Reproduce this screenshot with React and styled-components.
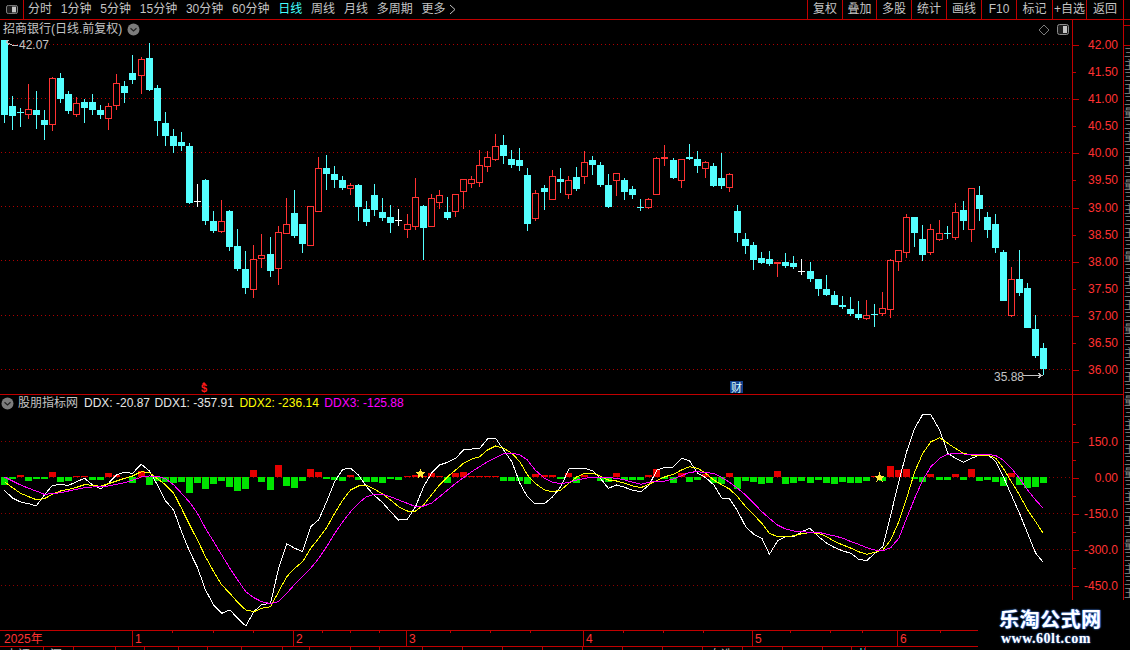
import React from "react";
import styled, { createGlobalStyle } from "styled-components";

const RED_LINE = "#c00000";
const RED_TEXT = "#ff3232";
const CYAN = "#54ffff";
const UI_FONT = '"Noto Sans CJK SC", "Liberation Sans", sans-serif';
const NUM_FONT = '"Liberation Sans", "Noto Sans CJK SC", sans-serif';

const Global = createGlobalStyle`
  html, body { margin: 0; padding: 0; background: #000; }
  #root { width: 1130px; height: 650px; }
`;

const Screen = styled.div`
  position: relative;
  width: 1130px;
  height: 650px;
  background: #000;
  overflow: hidden;
  display: flex;
  flex-direction: column;
  font-family: ${UI_FONT};
`;

const Toolbar = styled.header`
  display: flex;
  align-items: stretch;
  height: 19px;
  border-bottom: 1px solid ${RED_LINE};
  flex: none;
`;
const ToggleBox = styled.div`
  width: 23px;
  border-right: 1px solid ${RED_LINE};
  display: flex;
  align-items: center;
  justify-content: center;
  flex: none;
`;
const PeriodTabs = styled.nav`
  display: flex;
  align-items: center;
  gap: 8.8px;
  padding-left: 4px;
  flex: 1;
`;
const PeriodTab = styled.span`
  font-size: 12px;
  line-height: 19px;
  white-space: nowrap;
  color: ${(p) => (p.$active ? "#4ff" : "#c4c4c4")};
  font-family: ${NUM_FONT};
`;
const MoreArrowSlot = styled.span`
  display: flex;
  margin-left: -5px;
`;
const ActionButton = styled.div`
  width: ${(p) => p.$w}px;
  flex: none;
  box-sizing: border-box;
  border-left: 1px solid ${RED_LINE};
  font-size: 12px;
  line-height: 19px;
  color: #c4c4c4;
  text-align: center;
  white-space: nowrap;
  font-family: ${NUM_FONT};
`;
const ToolbarEnd = styled.div`
  width: 7px;
  border-left: 1px solid ${RED_LINE};
  flex: none;
  box-sizing: border-box;
`;

const Body = styled.main`
  display: grid;
  grid-template-columns: 1072px 51px 7px;
  grid-template-rows: 375px 235px;
  flex: none;
`;
const Pane = styled.section`
  position: relative;
  box-sizing: border-box;
  ${(p) => p.$divider && `border-bottom: 1px solid ${RED_LINE};`}
`;
const ChartSvg = styled.svg`
  display: block;
`;
const PaneTitle = styled.div`
  position: absolute;
  left: ${(p) => p.$left}px;
  top: ${(p) => p.$top}px;
  display: flex;
  align-items: center;
  gap: ${(p) => p.$gap || 0}px;
  white-space: nowrap;
  font-size: 12px;
  line-height: 16px;
  color: #c4c4c4;
  font-family: ${NUM_FONT};
`;
const LegendItem = styled.span`
  color: ${(p) => p.$color};
  font-family: ${NUM_FONT};
  font-size: 12px;
  margin-right: ${(p) => p.$mr ?? 1.5}px;
`;
const PriceTag = styled.span`
  position: absolute;
  left: ${(p) => p.$left}px;
  top: ${(p) => p.$top}px;
  font-family: ${NUM_FONT};
  font-size: 12px;
  line-height: 14px;
  color: #c4c4c4;
`;
const Overlay = styled.div`
  position: absolute;
  left: ${(p) => p.$left}px;
  top: ${(p) => p.$top}px;
  display: flex;
`;
const EventDollar = styled.span`
  position: absolute;
  left: 200px;
  top: 363px;
  width: 8px;
  text-align: center;
  font-family: ${NUM_FONT};
  font-weight: 700;
  font-size: 11px;
  line-height: 11px;
  color: #ff1a1a;
  &::before {
    content: "";
    position: absolute;
    left: 1.5px;
    top: -1px;
    border-left: 2.5px solid transparent;
    border-right: 2.5px solid transparent;
    border-bottom: 2px solid #ff1a1a;
  }
`;
const EventBadge = styled.span`
  position: absolute;
  left: 730px;
  top: 361px;
  width: 13px;
  height: 12px;
  background: #123f8c;
  color: #dff;
  font-size: 11px;
  line-height: 12px;
  text-align: center;
`;

const Scale = styled.div`
  box-sizing: border-box;
  border-left: 1px solid ${RED_LINE};
  padding-top: ${(p) => p.$pad}px;
  ${(p) => p.$divider && `border-bottom: 1px solid ${RED_LINE};`}
`;
const ScaleRow = styled.div`
  position: relative;
  height: ${(p) => p.$h}px;
  display: flex;
  align-items: center;
  justify-content: flex-end;
  padding-right: 5px;
  font-family: ${NUM_FONT};
  font-size: 12px;
  color: ${RED_TEXT};
  &::before {
    content: "";
    position: absolute;
    left: 0;
    top: 50%;
    width: ${(p) => (p.$major ? 6 : 3)}px;
    height: 1px;
    background: ${RED_LINE};
  }
`;

const ClippedColumn = styled.aside`
  grid-row: 1 / span 2;
  grid-column: 3;
  box-sizing: border-box;
  border-left: 1px solid ${RED_LINE};
  display: flex;
  flex-direction: column;
  overflow: hidden;
`;
const ClipHead = styled.div`
  height: 5px;
  border-bottom: 1px solid ${RED_LINE};
  flex: none;
`;
const ClipHeadTall = styled.div`
  height: 19px;
  border-bottom: 1px solid ${RED_LINE};
  flex: none;
`;
const ClipLine = styled.div`
  width: 6px;
  height: 12px;
  overflow: hidden;
  white-space: nowrap;
  font-size: 11px;
  line-height: 12px;
  color: #8a8a8a;
  flex: none;
`;

const TimeAxis = styled.div`
  width: 978px;
  height: 15px;
  position: relative;
  display: flex;
  border-top: 1px solid ${RED_LINE};
  border-bottom: 1px solid ${RED_LINE};
  flex: none;
`;
const TimeSegment = styled.div`
  width: ${(p) => p.$w}px;
  box-sizing: border-box;
  flex: none;
  padding-left: ${(p) => (p.$first ? 4 : 2)}px;
  ${(p) => !p.$first && `border-left: 1px solid ${RED_LINE};`}
  font-family: ${NUM_FONT};
  font-size: 12px;
  line-height: 16px;
  color: ${RED_TEXT};
`;
const AxisTicks = styled.svg`
  position: absolute;
  left: 0;
  top: 0;
`;

const StatusBar = styled.footer`
  display: flex;
  height: 3px;
  overflow: hidden;
  flex: none;
`;
const StatusCell = styled.div`
  width: ${(p) => p.$w}px;
  box-sizing: border-box;
  flex: none;
  padding-left: 6px;
  ${(p) => !p.$first && `border-left: 1px solid ${RED_LINE};`}
  font-size: 12px;
  line-height: 14px;
  margin-top: 0;
  color: ${(p) => (p.$hot ? CYAN : "#bdbdbd")};
  white-space: nowrap;
  overflow: hidden;
`;

const Watermark = styled.div`
  position: absolute;
  left: 978px;
  top: 600px;
  width: 152px;
  height: 50px;
  background: #000;
  display: flex;
  flex-direction: column;
  align-items: flex-start;
  padding: 7px 0 0 21px;
  box-sizing: border-box;
`;
const WatermarkTitle = styled.div`
  font-family: "Noto Sans CJK SC", sans-serif;
  font-weight: 700;
  font-size: 20px;
  line-height: 24px;
  letter-spacing: 0.5px;
  color: #fff;
  text-shadow: 0 0 2px #4a90ff, 1px 0 1px #3f7fe0;
`;
const WatermarkUrl = styled.div`
  font-family: "Liberation Serif", serif;
  font-weight: 700;
  font-size: 14px;
  line-height: 15px;
  letter-spacing: 0.5px;
  color: #fff;
  text-shadow: 0 0 2px #4a90ff;
  margin-left: 2px;
`;

/* x, kind, wickTop, bodyTop, bodyBottom, wickBottom  (c cyan, r hollow red, d cyan doji, w white doji, f red bar) */
const CANDLES = [
  [4,"c",40,40,115,123],[12,"c",96,106,116,130],[20,"d",108,112,112,127],[28,"r",84,109,114,119],[36,"c",91,110,115,129],[44,"c",110,120,125,140],
  [52,"r",77,78,124,131],[60,"c",73,78,99,103],[68,"c",91,94,111,114],[76,"r",97,103,114,117],[84,"c",99,102,108,123],[92,"c",94,102,110,115],
  [100,"c",105,110,115,119],[108,"r",103,106,118,130],[116,"r",74,83,105,110],[124,"c",81,86,93,103],[132,"c",55,73,80,84],[141,"r",57,59,75,94],
  [149,"c",43,58,90,91],[157,"c",85,88,121,136],[165,"c",112,123,136,146],[173,"c",129,136,146,153],[181,"c",132,142,146,151],[189,"c",143,146,203,204],
  [197,"w",184,201,201,207],[205,"c",179,180,221,225],[213,"c",211,221,231,233],[221,"r",200,221,231,233],[229,"c",210,211,247,251],[237,"c",229,246,269,271],
  [245,"c",251,269,288,294],[253,"r",245,259,289,298],[261,"r",234,255,258,268],[270,"c",237,254,271,277],[278,"r",226,232,268,285],[286,"r",198,224,233,233],
  [294,"c",190,213,236,238],[302,"c",224,224,244,253],[310,"r",206,206,245,246],[318,"r",157,168,211,211],[326,"c",155,168,174,190],[334,"c",166,174,180,188],
  [342,"c",176,180,188,190],[350,"r",183,185,188,195],[358,"c",184,185,207,221],[366,"c",201,209,222,226],[374,"c",184,195,210,216],[382,"c",198,212,218,221],
  [390,"c",205,217,223,233],[398,"w",209,220,220,226],[407,"r",214,224,229,238],[415,"r",178,197,226,230],[423,"c",205,206,228,260],[431,"r",194,198,226,226],
  [439,"r",190,195,202,209],[447,"c",197,212,218,220],[455,"r",194,194,211,217],[463,"r",179,179,191,209],[471,"r",176,179,183,188],[479,"r",150,165,182,187],
  [487,"r",151,157,166,172],[495,"r",134,146,159,161],[503,"c",135,145,156,164],[511,"c",150,159,165,168],[519,"c",148,160,166,171],[527,"c",168,175,224,231],
  [535,"r",190,193,218,221],[544,"c",185,188,192,210],[552,"r",170,176,199,199],[560,"c",168,179,182,193],[568,"r",176,180,194,199],[576,"c",167,177,189,191],
  [584,"r",151,162,176,184],[592,"c",156,160,165,175],[600,"c",162,165,185,187],[608,"c",174,185,207,208],[616,"r",173,173,180,196],[624,"c",178,180,192,200],
  [632,"c",186,189,195,199],[640,"c",199,207,207,211],[648,"r",198,199,207,209],[656,"r",157,158,194,194],[664,"f",145,157,159,166],[673,"c",158,160,178,179],
  [681,"r",159,159,180,188],[689,"c",144,157,159,160],[697,"c",151,159,166,173],[705,"r",161,162,168,178],[713,"c",163,166,186,187],[721,"c",153,178,186,189],
  [729,"r",173,174,187,192],[737,"c",205,211,233,242],[745,"c",233,239,246,254],[753,"c",242,245,260,270],[761,"c",252,258,263,264],[769,"c",251,259,264,266],
  [777,"f",262,262,264,277],[785,"c",253,262,266,268],[793,"c",256,263,267,269],[801,"w",259,271,271,275],[810,"c",262,271,279,282],[818,"c",279,279,289,296],
  [826,"c",275,289,295,296],[834,"c",291,295,305,305],[842,"c",296,305,307,309],[850,"c",297,309,314,316],[858,"c",301,314,318,320],[866,"r",300,315,318,320],
  [874,"d",304,314,314,327],[882,"r",292,308,313,316],[890,"r",259,260,309,318],[898,"r",250,250,261,271],[906,"r",214,217,252,258],[914,"c",217,217,233,247],
  [922,"c",225,239,255,261],[930,"r",224,229,252,255],[939,"r",220,233,239,241],[947,"d",226,233,233,239],[955,"r",203,212,237,240],[963,"c",201,210,221,230],
  [971,"r",188,188,229,242],[979,"c",186,195,209,221],[987,"c",212,217,230,238],[995,"c",214,224,248,253],[1003,"c",250,252,301,301],[1011,"r",267,279,315,317],
  [1019,"c",250,279,293,296],[1027,"c",283,288,328,328],[1035,"c",315,329,356,358],[1043,"c",343,348,369,375],
];

/* signed histogram height for each candle: positive red, negative green */
const BARS = [-8,-2,2,-4,-2,-2,5,-5,-4,1,1,-3,-3,4,2,0,-6,6,-8,-4,-5,-6,-5,-16,-6,-12,-7,-4,-10,-14,-12,7,-5,-13,12,-9,-11,-4,8,5,-2,-3,-4,2,-3,-5,-5,-6,-2,-3,1,2,1,4,1,-6,4,5,1,1,1,1,-4,-4,-4,-7,3,2,2,-2,4,-6,2,-1,-4,-5,4,-3,-3,-3,2,8,-2,-6,4,-5,-3,3,-6,-7,4,-12,-4,-5,-7,-6,6,-7,-6,-4,-6,-3,-6,-7,-5,-6,-6,-4,1,-4,11,7,8,-2,-5,3,-3,-3,3,-3,8,-4,-3,-5,-9,4,-8,-11,-10,-6];

const WHITE_L = [[13,256],[37,279],[61,291],[85,296],[107,303],[131,270],[155,241],[179,239],[203,241],[227,230],[250,220],[274,240],[298,251],[321,235],[345,209],[369,202],[392,205],[418,178],[442,198],[466,240],[490,288],[514,316],[537,380],[561,440],[584,487],[608,555],[632,600],[656,625],[680,615],[703,640],[727,663],[751,620],[774,598],[800,596],[824,490],[848,416],[872,430],[895,440],[919,365],[943,344],[966,290],[990,230],[1014,193],[1037,190],[1060,210],[1084,245],[1108,272],[1131,292],[1155,320],[1179,345],[1205,343],[1229,305],[1253,245],[1276,205],[1300,180],[1324,172],[1348,160],[1371,135],[1395,132],[1419,130],[1442,102],[1466,100],[1490,135],[1514,170],[1538,235],[1560,275]];
const WHITE_R = [[15,297],[43,296],[67,275],[91,245],[115,192],[139,190],[163,190],[187,198],[208,220],[232,250],[256,240],[280,247],[304,256],[328,260],[352,240],[376,195],[400,187],[424,186],[448,160],[472,168],[496,205],[520,218],[544,240],[568,280],[590,281],[614,318],[638,365],[662,388],[686,400],[708,448],[732,408],[756,395],[780,395],[804,380],[828,370],[854,395],[878,415],[902,428],[926,438],[950,445],[972,463],[996,467],[1020,445],[1044,425],[1067,330],[1091,230],[1114,140],[1138,70],[1162,28],[1186,30],[1212,75],[1236,145],[1258,160],[1282,172],[1306,160],[1330,150],[1354,148],[1378,170],[1400,215],[1424,270],[1448,325],[1472,385],[1496,445],[1518,472]];
const YELLOW_L = [[13,230],[37,248],[61,265],[85,275],[107,284],[131,281],[155,268],[179,258],[203,253],[227,247],[250,239],[274,241],[298,244],[321,236],[345,228],[369,220],[392,213],[418,200],[442,203],[466,221],[490,240],[514,265],[537,310],[561,360],[584,405],[608,455],[632,500],[656,540],[680,565],[703,592],[727,615],[751,620],[774,610],[800,605],[824,560],[848,515],[872,490],[895,470],[919,430],[943,400],[966,368],[990,325],[1014,285],[1037,255],[1060,243],[1084,241],[1108,253],[1131,267],[1155,285],[1179,305],[1205,318],[1229,318],[1253,300],[1276,270],[1300,240],[1324,215],[1348,195],[1371,175],[1395,162],[1419,155],[1442,135],[1466,123],[1490,130],[1514,145],[1538,170],[1560,210]];
const YELLOW_R = [[15,235],[43,255],[67,260],[91,255],[115,235],[139,215],[163,205],[187,205],[208,213],[232,225],[256,228],[280,235],[304,243],[328,248],[352,238],[376,226],[400,215],[424,208],[448,195],[472,185],[496,190],[520,205],[544,225],[568,240],[590,252],[614,275],[638,305],[662,330],[686,355],[708,385],[732,395],[756,396],[780,392],[804,386],[828,383],[854,385],[878,395],[902,410],[926,420],[950,430],[972,440],[996,448],[1020,442],[1044,435],[1067,405],[1091,350],[1114,280],[1138,200],[1162,145],[1186,110],[1212,98],[1236,115],[1258,130],[1282,145],[1306,150],[1330,150],[1354,150],[1378,160],[1400,190],[1424,230],[1448,270],[1472,315],[1496,350],[1518,385]];
const MAGENTA_L = [[13,216],[37,228],[61,240],[85,250],[107,258],[131,268],[155,266],[179,263],[203,258],[227,253],[250,248],[274,246],[298,245],[321,243],[345,238],[369,233],[392,226],[418,216],[442,213],[466,214],[490,222],[514,240],[537,265],[561,292],[584,325],[608,370],[632,410],[656,450],[680,490],[703,525],[727,560],[751,578],[774,590],[800,596],[824,590],[848,565],[872,538],[895,515],[919,490],[943,460],[966,425],[990,385],[1014,350],[1037,320],[1060,295],[1084,275],[1108,268],[1131,268],[1155,275],[1179,285],[1205,295],[1229,305],[1253,303],[1276,295],[1300,275],[1324,255],[1348,235],[1371,218],[1395,200],[1419,185],[1442,170],[1466,158],[1490,146],[1514,144],[1538,150],[1560,165]];
const MAGENTA_R = [[15,195],[43,220],[67,232],[91,236],[115,232],[139,225],[163,220],[187,216],[208,216],[232,218],[256,220],[280,225],[304,232],[328,238],[352,232],[376,228],[400,228],[424,222],[448,212],[472,202],[496,200],[520,203],[544,205],[568,218],[590,232],[614,250],[638,270],[662,295],[686,320],[708,340],[732,360],[756,372],[780,378],[804,380],[828,382],[854,382],[878,388],[902,393],[926,400],[950,410],[972,418],[996,428],[1020,435],[1044,437],[1067,428],[1091,400],[1114,340],[1138,280],[1162,225],[1186,185],[1212,160],[1236,148],[1258,145],[1282,147],[1306,148],[1330,148],[1354,148],[1378,152],[1400,165],[1424,190],[1448,220],[1472,255],[1496,285],[1518,310]];

const toPoints = (left, right) =>
  [...left.map(([x, y]) => [x / 2.958, 405 + y / 3]), ...right.map(([x, y]) => [530 + x / 2.958, 405 + y / 3])]
    .map(([x, y]) => `${x.toFixed(1)},${y.toFixed(1)}`)
    .join(" ");

const Candle = ({ c }) => {
  const [x, kind, wt, bt, bb, wb] = c;
  const h = Math.max(bb - bt, 1);
  if (kind === "c") {
    return (
      <g fill={CYAN}>
        <rect x={x} y={wt} width="1" height={wb - wt} />
        <rect x={x - 3} y={bt} width="7" height={h} />
      </g>
    );
  }
  if (kind === "r") {
    return (
      <g>
        <rect x={x} y={wt} width="1" height={bt - wt} fill="#ff3232" />
        <rect x={x} y={bb} width="1" height={wb - bb} fill="#ff3232" />
        <rect x={x - 2.5} y={bt + 0.5} width="6" height={h} fill="#000" stroke="#ff3232" strokeWidth="1" />
      </g>
    );
  }
  const color = kind === "w" ? "#fff" : kind === "f" ? "#ff3232" : CYAN;
  return (
    <g fill={color}>
      <rect x={x} y={wt} width="1" height={wb - wt} />
      <rect x={x - 3} y={bt} width="7" height={kind === "f" ? h : 1} />
    </g>
  );
};

const GridLine = ({ y, dim }) => (
  <line x1="1" x2="1072" y1={y + 0.5} y2={y + 0.5} stroke={dim ? "#8c0000" : "#b00000"} strokeWidth="1" strokeDasharray="1 3" />
);

const starPoints = (cx, cy, r) => {
  const pts = [];
  for (let i = 0; i < 10; i++) {
    const a = -Math.PI / 2 + (i * Math.PI) / 5;
    const d = i % 2 ? r * 0.42 : r;
    pts.push(`${(cx + d * Math.cos(a)).toFixed(1)},${(cy + d * Math.sin(a)).toFixed(1)}`);
  }
  return pts.join(" ");
};

const PanelIcon = ({ w, h }) => (
  <svg width={w} height={h} viewBox="0 0 12 11" preserveAspectRatio="none">
    <rect x="0.5" y="0.5" width="11" height="10" rx="2" fill="#1c1c1c" stroke="#8c8c8c" />
    <rect x="6" y="2" width="4" height="7" fill="#c4c4c4" />
  </svg>
);
const DiamondIcon = () => (
  <svg width="12" height="12" viewBox="0 0 12 12">
    <path d="M6 1 L11 6 L6 11 L1 6 Z" fill="none" stroke="#7c7c7c" />
  </svg>
);
const ChevronCircle = () => (
  <svg width="13" height="13" viewBox="0 0 13 13">
    <circle cx="6.5" cy="6.5" r="6" fill="#7c7c7c" />
    <path d="M3.5 5.2 L6.5 8 L9.5 5.2" fill="none" stroke="#222" strokeWidth="1.2" />
  </svg>
);
const MoreArrow = () => (
  <svg width="7" height="11" viewBox="0 0 7 11">
    <path d="M1 1 L6 5.5 L1 10" fill="none" stroke="#c4c4c4" />
  </svg>
);

const TABS = ["分时", "1分钟", "5分钟", "15分钟", "30分钟", "60分钟", "日线", "周线", "月线", "多周期", "更多"];
const ACTIONS = [["复权", 35], ["叠加", 34], ["多股", 35], ["统计", 35], ["画线", 35], ["F10", 35], ["标记", 36], ["+自选", 34], ["返回", 37]];
const PRICES = ["42.00", "41.50", "41.00", "40.50", "40.00", "39.50", "39.00", "38.50", "38.00", "37.50", "37.00", "36.50", "36.00"];
const DDX_ROWS = [null, "150.0", null, "0.00", null, "-150.0", null, "-300.0", null, "-450.0"];
const PRICE_GRID = [44, 98, 152, 206, 260, 315, 369];
const DDX_GRID = [441, 477, 513, 549, 585];
const MONTHS = [["2025年", 132], ["1", 161], ["2", 113], ["3", 177], ["4", 169], ["5", 145], ["6", 81]];
const TICKS = [172, 213, 253, 322, 350, 379, 450, 490, 530, 623, 663, 703, 790, 830, 862, 940];
const STATUS = [[43, "上证"], [30, "深"], [42, ""], [29, ""], [34, ""], [29, ""], [34, ""], [41, ""], [27, ""], [41, ""], [29, ""], [43, ""], [40, ""], [40, ""], [40, ""], [40, ""], [40, ""], [40, ""], [40, ""], [40, "自选"], [40, ""], [40, ""], [29, ""], [14, "热", true], [106, ""]];
const SIDE = ["三", "主", "三", "王", "三", "量", "三", "主", "三", "王", "三", "量", "三", "主", "三", "王", "三", "量", "三", "主", "三", "王", "三", "量", "三", "主", "三", "王", "三", "量", "三", "主", "三", "王", "三", "量", "三", "主", "三", "王", "三", "量", "三", "主", "三", "王", "三"];

export default function App() {
  return (
    <Screen>
      <Global />
      <Toolbar>
        <ToggleBox>
          <PanelIcon w={12} h={9} />
        </ToggleBox>
        <PeriodTabs>
          {TABS.map((t) => (
            <PeriodTab key={t} $active={t === "日线"}>{t}</PeriodTab>
          ))}
          <MoreArrowSlot><MoreArrow /></MoreArrowSlot>
        </PeriodTabs>
        {ACTIONS.map(([t, w]) => (
          <ActionButton key={t} $w={w}>{t}</ActionButton>
        ))}
        <ToolbarEnd />
      </Toolbar>

      <Body>
        <Pane $divider>
          <ChartSvg width="1072" height="374" viewBox="0 20 1072 374" shapeRendering="crispEdges">
            {PRICE_GRID.map((y) => <GridLine key={y} y={y} />)}
            {CANDLES.map((c) => <Candle key={c[0]} c={c} />)}
            <path d="M6 42 L12 45 L18 45 M6 42 L9 40 M6 42 L9 45" fill="none" stroke="#c4c4c4" />
            <path d="M1023 375.5 H1042 M1038 373 L1042 375.5 L1038 378" fill="none" stroke="#c4c4c4" />
          </ChartSvg>
          <PaneTitle $left={3} $top={1} $gap={5}>
            招商银行(日线.前复权)
            <ChevronCircle />
          </PaneTitle>
          <PriceTag $left={19} $top={18}>42.07</PriceTag>
          <PriceTag $left={994} $top={350}>35.88</PriceTag>
          <Overlay $left={1038} $top={4}><DiamondIcon /></Overlay>
          <Overlay $left={1057} $top={4}><PanelIcon w={12} h={11} /></Overlay>
          <EventDollar>$</EventDollar>
          <EventBadge>财</EventBadge>
        </Pane>

        <Scale $pad={11.5} $divider>
          {PRICES.map((p, i) => (
            <ScaleRow key={p} $h={27.08} $major={i % 2 === 0}>{p}</ScaleRow>
          ))}
        </Scale>

        <ClippedColumn>
          <ClipHead />
          <ClipHeadTall />
          {SIDE.map((s, i) => <ClipLine key={i}>{s}</ClipLine>)}
        </ClippedColumn>

        <Pane>
          <ChartSvg width="1072" height="235" viewBox="0 395 1072 235" shapeRendering="crispEdges">
            {DDX_GRID.map((y) => <GridLine key={y} y={y} dim />)}
            {BARS.map((v, i) => {
              const x = CANDLES[i][0] - 3;
              if (v === 0) return null;
              return v > 0
                ? <rect key={i} x={x} y={477 - v} width="7" height={v} fill="#e60000" />
                : <rect key={i} x={x} y={477} width="7" height={-v} fill="#00e600" />;
            })}
            <polyline points={toPoints(WHITE_L, WHITE_R)} fill="none" stroke="#fff" strokeWidth="1" />
            <polyline points={toPoints(YELLOW_L, YELLOW_R)} fill="none" stroke="#ffff00" strokeWidth="1" />
            <polyline points={toPoints(MAGENTA_L, MAGENTA_R)} fill="none" stroke="#ff00ff" strokeWidth="1" />
            <polygon points={starPoints(420.5, 474, 5.5)} fill="#ffea3c" />
            <polygon points={starPoints(879.5, 477.5, 5.5)} fill="#ffea3c" />
          </ChartSvg>
          <PaneTitle $left={1} $top={0} $gap={4}>
            <ChevronCircle />
            <LegendItem $color="#c4c4c4" $mr={2}>股朋指标网</LegendItem>
            <LegendItem $color="#e6e6e6" $mr={0.5}>DDX: -20.87</LegendItem>
            <LegendItem $color="#e6e6e6" $mr={1.5}>DDX1: -357.91</LegendItem>
            <LegendItem $color="#ffff00" $mr={1.5}>DDX2: -236.14</LegendItem>
            <LegendItem $color="#ff00ff">DDX3: -125.88</LegendItem>
          </PaneTitle>
        </Pane>

        <Scale $pad={20}>
          {DDX_ROWS.map((v, i) => (
            <ScaleRow key={i} $h={18} $major={!!v}>{v}</ScaleRow>
          ))}
        </Scale>
      </Body>

      <TimeAxis>
        {MONTHS.map(([label, w], i) => (
          <TimeSegment key={label} $w={w} $first={i === 0}>{label}</TimeSegment>
        ))}
        <AxisTicks width="978" height="3" viewBox="0 0 978 3" shapeRendering="crispEdges">
          {TICKS.map((x) => <rect key={x} x={x} y="0" width="1" height="2" fill={RED_LINE} />)}
        </AxisTicks>
      </TimeAxis>

      <StatusBar>
        {STATUS.map(([w, label, hot], i) => (
          <StatusCell key={i} $w={w} $first={i === 0} $hot={hot}>{label}</StatusCell>
        ))}
      </StatusBar>

      <Watermark>
        <WatermarkTitle>乐淘公式网</WatermarkTitle>
        <WatermarkUrl>www.60lt.com</WatermarkUrl>
      </Watermark>
    </Screen>
  );
}
